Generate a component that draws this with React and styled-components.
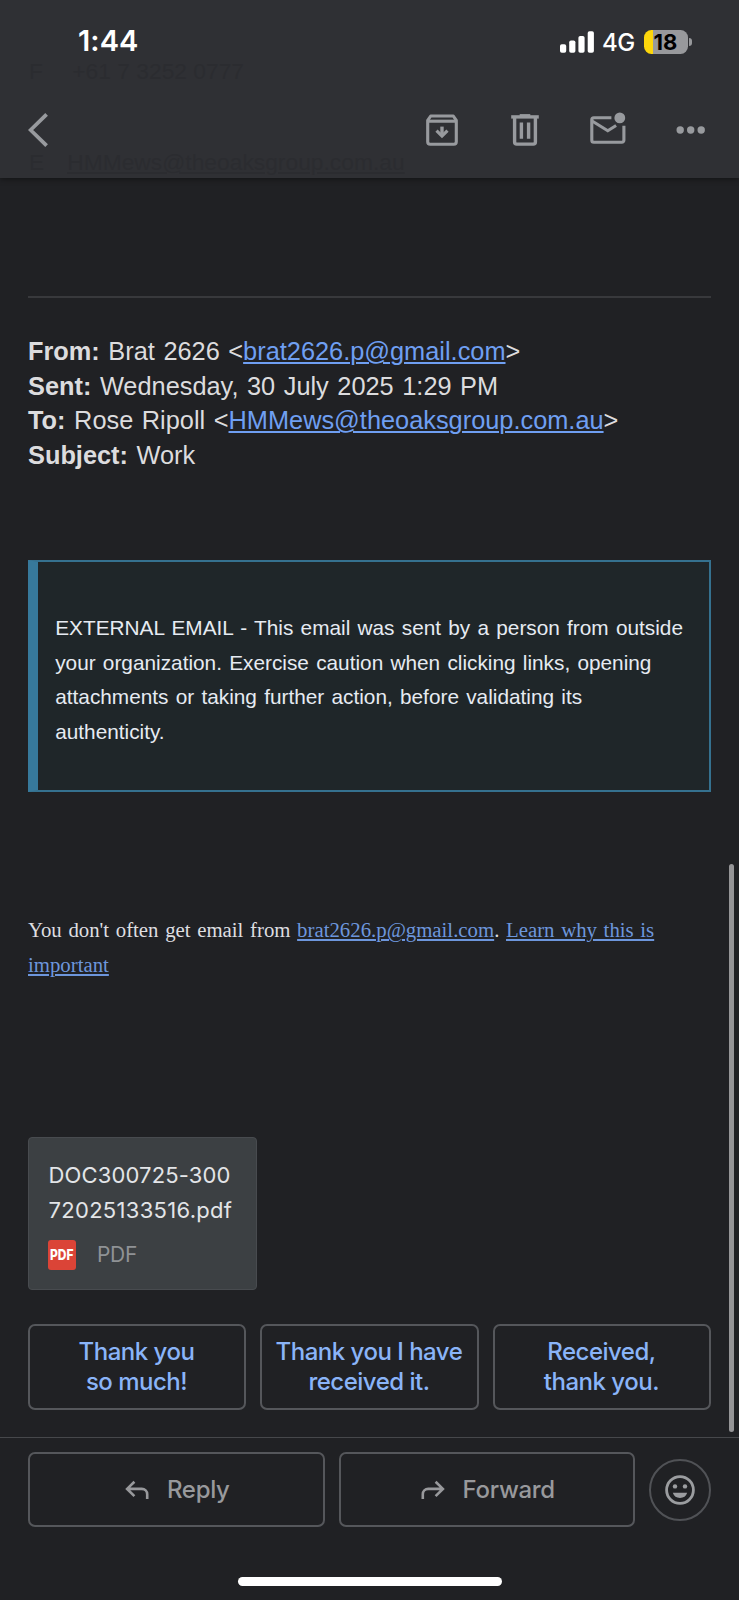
import React from "react";
import styled, { createGlobalStyle } from "styled-components";

const sans = `"Liberation Sans", Arial, sans-serif`;
const ui = `Inter, "Liberation Sans", sans-serif`;
const iconGrey = "#989a9e";

const Global = createGlobalStyle`
  *, *::before, *::after { box-sizing: border-box; }
  html, body { margin: 0; background: #202124; }
  button { margin: 0; padding: 0; background: none; border: 0; font: inherit; }
`;

const Screen = styled.div`
  position: relative;
  width: 739px;
  height: 1600px;
  overflow: hidden;
  display: flex;
  flex-direction: column;
  background: #202124;
  color: #dcdcde;
  font-family: ${sans};
`;

const Header = styled.header`
  position: relative;
  flex: none;
  height: 178px;
  background: #2f3034;
  box-shadow: 0 1px 6px rgba(0, 0, 0, 0.45);
`;

const Underlay = styled.div`
  position: absolute;
  left: 29px;
  top: ${(p) => p.$top}px;
  display: flex;
  gap: 23px;
  font-size: 22.8px;
  line-height: 30px;
  color: #2b2c30;
  white-space: pre;
`;

const UnderlayValue = styled.span`
  text-decoration: ${(p) => (p.$link ? "underline" : "none")};
`;

const StatusBar = styled.div`
  position: relative;
  display: flex;
  align-items: center;
  justify-content: space-between;
  height: 84px;
  padding: 0 47px 0 78px;
  font-family: ${ui};
  color: #fff;
`;

const Clock = styled.span`
  margin-top: -2px;
  font-size: 29px;
  font-weight: 600;
  letter-spacing: 0.1px;
  line-height: 34px;
`;

const StatusRight = styled.div`
  display: flex;
  align-items: center;
`;

const Network = styled.span`
  width: 32px;
  margin: 2px 10px 0 8px;
  font-size: 24px;
  font-weight: 500;
  letter-spacing: -0.6px;
  line-height: 28px;
  white-space: nowrap;
`;

const Battery = styled.div`
  display: flex;
  align-items: center;
  justify-content: center;
  width: 44px;
  height: 24px;
  padding-right: 1px;
  border-radius: 7.5px;
  background: linear-gradient(to right, #fdd60b 9px, #98999c 9px);
  color: #000;
  font-size: 22px;
  font-weight: 700;
  letter-spacing: 0;
  line-height: 24px;
`;

const BatteryNub = styled.i`
  width: 3px;
  height: 8px;
  margin-left: 1px;
  border-radius: 0 3px 3px 0;
  background: #98999c;
`;

const Toolbar = styled.nav`
  position: relative;
  display: flex;
  align-items: center;
  height: 91px;
  padding: 0 30px 0 27.5px;
`;

const IconButton = styled.button`
  display: block;
  width: 36px;
  height: 36px;
  margin-left: ${(p) => p.$gap || 0}px;
  color: ${iconGrey};
  svg { display: block; }
`;

const Spacer = styled.div`
  flex: 1;
`;

const Message = styled.main`
  flex: none;
  height: 1260px;
  padding: 118px 27px 0 28px;
  display: flex;
  flex-direction: column;
  align-items: flex-start;
  border-bottom: 1px solid #46484b;
`;

const Rule = styled.hr`
  flex: none;
  width: 683px;
  height: 2px;
  margin: 0 0 36.1px;
  border: 0;
  background: #38393c;
`;

const MailHeaders = styled.div`
  font-size: 25.35px;
  line-height: 34.6px;
  word-spacing: 1.5px;
  white-space: nowrap;
`;

const Link = styled.a`
  color: ${(p) => p.$tone || "#6f9ff2"};
  text-decoration: underline;
  text-decoration-thickness: 1.5px;
  text-underline-offset: 2px;
`;

const Notice = styled.section`
  flex: none;
  width: 683.4px;
  height: 232px;
  margin-top: 87.5px;
  padding: 49px 0 0 17.2px;
  border: 2px solid #35718f;
  border-left: 10px solid #37799b;
  background: #1f2629;
  color: #e6ebf2;
  font-size: 20.8px;
  line-height: 34.6px;
  word-spacing: 1.45px;
  white-space: nowrap;
`;

const Tip = styled.p`
  margin: 121.2px 0 0;
  font-family: "Liberation Serif", "Times New Roman", serif;
  font-size: 20.8px;
  line-height: 34.6px;
  word-spacing: 1.45px;
  white-space: nowrap;
  color: #dedee0;
`;

const Attachment = styled.section`
  flex: none;
  width: 229px;
  height: 153px;
  margin: 154.6px 0 0 -0.5px;
  padding: 20.4px 0 0 20px;
  border: 1px solid #484b4f;
  border-radius: 4px;
  background: #3c4043;
  font-family: ${ui};
  color: #e3e5e8;
`;

const FileName = styled.div`
  font-size: 22px;
  line-height: 35px;
  letter-spacing: ${(p) => p.$track}px;
  white-space: nowrap;
`;

const FileMeta = styled.div`
  display: flex;
  align-items: center;
  gap: 21px;
  height: 30px;
  margin: 11.4px 0 0 -0.6px;
  font-size: 21px;
  letter-spacing: -0.2px;
  color: #8f9295;
`;

const PdfBadge = styled.span`
  display: flex;
  align-items: center;
  justify-content: center;
  width: 28px;
  height: 30px;
  border-radius: 3px;
  background: #db4437;
  color: #fff;
  font: 800 15px/30px Inter, sans-serif;
  letter-spacing: 0;
`;

const PdfBadgeLabel = styled.span`
  flex: none;
  transform: scaleX(0.8);
`;

const SmartReplies = styled.div`
  display: grid;
  grid-template-columns: repeat(3, 1fr);
  gap: 14px;
  width: 683.4px;
  margin-top: 34px;
`;

const SmartReply = styled.button`
  height: 86px;
  padding: 1px 1.5px 0 0;
  border: 2px solid #55575b;
  border-radius: 7px;
  color: #8ab4f8;
  font-family: ${ui};
  font-size: 24px;
  font-weight: 500;
  line-height: 30.7px;
  letter-spacing: -0.5px;
  white-space: nowrap;
`;

const ReplyBar = styled.footer`
  display: flex;
  align-items: center;
  gap: 14px;
  flex: none;
  height: 75px;
  margin: 14px 28px 0 28px;
`;

const ActionButton = styled.button`
  flex: 1;
  display: flex;
  align-items: center;
  justify-content: center;
  gap: ${(p) => p.$gap}px;
  height: 75px;
  padding-left: 2px;
  border: 2px solid #55575b;
  border-radius: 7px;
  color: #98999c;
  font-family: ${ui};
  font-size: 24px;
  font-weight: 500;
  letter-spacing: -0.3px;
  svg { display: block; }
`;

const EmojiButton = styled.button`
  display: flex;
  align-items: center;
  justify-content: center;
  width: 62px;
  height: 62px;
  border: 2px solid #505256;
  border-radius: 50%;
  color: #9b9da0;
`;

const HomeIndicator = styled.div`
  flex: none;
  width: 264px;
  height: 9px;
  margin: 50px auto 0 238px;
  border-radius: 5px;
  background: #fff;
`;

const ScrollThumb = styled.div`
  position: absolute;
  top: 864px;
  left: 728.5px;
  width: 5.5px;
  height: 568px;
  border-radius: 3px;
  background: #959597;
`;

const SignalIcon = () => (
  <svg width="34" height="22" viewBox="0 0 34 22" fill="#fff">
    <rect x="0" y="13.3" width="6.2" height="8.4" rx="1.8" />
    <rect x="9.2" y="9.4" width="6.2" height="12.3" rx="1.8" />
    <rect x="18.4" y="5" width="6.2" height="16.7" rx="1.8" />
    <rect x="27.7" y="0.3" width="6.2" height="21.4" rx="1.8" />
  </svg>
);

const BackIcon = () => (
  <svg width="36" height="36" viewBox="0 0 36 36" fill="none" stroke="currentColor" strokeWidth="3.8">
    <path d="M18.6 2.4 2.6 18l16 15.6" />
  </svg>
);

const ArchiveIcon = () => (
  <svg width="36" height="36" viewBox="0 0 36 36" fill="none" stroke="currentColor" strokeWidth="3.1">
    <path d="M3.7 8.4 6.7 4h22.6l3 4.4v21.3a2.5 2.5 0 0 1-2.5 2.5H6.2a2.5 2.5 0 0 1-2.5-2.5z" strokeLinejoin="round" />
    <path d="M3.7 9.2h28.6" />
    <path d="M18 14.6v8" strokeWidth="3.4" />
    <path d="m11.4 19.7 2.2-2.2 4.4 4.3 4.4-4.3 2.2 2.2-6.6 6.6z" fill="currentColor" stroke="none" />
  </svg>
);

const TrashIcon = () => (
  <svg width="36" height="36" viewBox="0 0 36 36" fill="none" stroke="currentColor" strokeWidth="3.4">
    <path d="M4.2 4.9h27.6" />
    <path d="M12.7 3.3h10.6" strokeWidth="2.4" />
    <path d="M7.6 5v25a2.1 2.1 0 0 0 2.1 2.1h16.6a2.1 2.1 0 0 0 2.1-2.1V5M14.4 10.6v16.2M21.6 10.6v16.2" />
  </svg>
);

const MailIcon = () => (
  <svg width="36" height="36" viewBox="0 0 36 36" fill="none" stroke="currentColor" strokeWidth="3.1">
    <path d="M21.4 5.8H3.8a2 2 0 0 0-2 2v20.5a2 2 0 0 0 2 2h28.1a2 2 0 0 0 2-2V13.7" />
    <path d="M2.5 9.2 17.8 18.7l8.3-5.2" />
    <circle cx="29.8" cy="5.9" r="5.4" fill="currentColor" stroke="none" />
  </svg>
);

const MoreIcon = () => (
  <svg width="36" height="36" viewBox="0 0 36 36" fill="currentColor">
    <circle cx="7.2" cy="18" r="3.7" />
    <circle cx="17.7" cy="18" r="3.7" />
    <circle cx="28.2" cy="18" r="3.7" />
  </svg>
);

const ArrowIcon = ({ forward }) => (
  <svg width="24" height="20" viewBox="0 0 24 20" fill="none" stroke="currentColor" strokeWidth="2.6">
    <g transform={forward ? "translate(24 0) scale(-1 1)" : undefined}>
      <path d="M9.4 1.7 2.1 8.9l7.3 7.2M2.1 8.9h14.7a5.4 5.4 0 0 1 5.4 5.4V19" />
    </g>
  </svg>
);

const SmileIcon = () => (
  <svg width="30" height="30" viewBox="0 0 30 30" fill="currentColor">
    <circle cx="15" cy="15" r="13.4" fill="none" stroke="currentColor" strokeWidth="2.8" />
    <circle cx="10" cy="11.4" r="2.2" />
    <circle cx="20" cy="11.4" r="2.2" />
    <path d="M7.8 17.8h14.4a7.6 7.6 0 0 1-14.4 0z" />
  </svg>
);

const smartReplies = [
  ["Thank you", "so much!"],
  ["Thank you I have", "received it."],
  ["Received,", "thank you."],
];

export default function App() {
  return (
    <Screen>
      <Global />
      <Header>
        <Underlay $top={56}>
          <span>F </span>
          <UnderlayValue>+61 7 3252 0777</UnderlayValue>
        </Underlay>
        <Underlay $top={147}>
          <span>E</span>
          <UnderlayValue $link>HMMews@theoaksgroup.com.au</UnderlayValue>
        </Underlay>
        <StatusBar>
          <Clock>1:44</Clock>
          <StatusRight>
            <SignalIcon />
            <Network>4G</Network>
            <Battery>18</Battery>
            <BatteryNub />
          </StatusRight>
        </StatusBar>
        <Toolbar>
          <IconButton aria-label="Back"><BackIcon /></IconButton>
          <Spacer />
          <IconButton aria-label="Archive"><ArchiveIcon /></IconButton>
          <IconButton aria-label="Delete" $gap={47}><TrashIcon /></IconButton>
          <IconButton aria-label="Mark unread" $gap={47}><MailIcon /></IconButton>
          <IconButton aria-label="More" $gap={47}><MoreIcon /></IconButton>
        </Toolbar>
      </Header>

      <Message>
        <Rule />
        <MailHeaders>
          <div><b>From:</b> Brat 2626 &lt;<Link>brat2626.p@gmail.com</Link>&gt;</div>
          <div><b>Sent:</b> Wednesday, 30 July 2025 1:29 PM</div>
          <div><b>To:</b> Rose Ripoll &lt;<Link>HMMews@theoaksgroup.com.au</Link>&gt;</div>
          <div><b>Subject:</b> Work</div>
        </MailHeaders>
        <Notice>
          EXTERNAL EMAIL - This email was sent by a person from outside<br />
          your organization. Exercise caution when clicking links, opening<br />
          attachments or taking further action, before validating its<br />
          authenticity.
        </Notice>
        <Tip>
          You don't often get email from <Link $tone="#6d96dc">brat2626.p@gmail.com</Link>.{" "}
          <Link $tone="#6d96dc">Learn why this is<br />important</Link>
        </Tip>
        <Attachment>
          <FileName $track={0.15}>DOC300725-300</FileName>
          <FileName $track={0.3}>72025133516.pdf</FileName>
          <FileMeta>
            <PdfBadge><PdfBadgeLabel>PDF</PdfBadgeLabel></PdfBadge>
            <span>PDF</span>
          </FileMeta>
        </Attachment>
        <SmartReplies>
          {smartReplies.map(([first, second]) => (
            <SmartReply key={first}>{first}<br />{second}</SmartReply>
          ))}
        </SmartReplies>
      </Message>

      <ReplyBar>
        <ActionButton $gap={18}><ArrowIcon />Reply</ActionButton>
        <ActionButton $gap={18}><ArrowIcon forward />Forward</ActionButton>
        <EmojiButton aria-label="React"><SmileIcon /></EmojiButton>
      </ReplyBar>
      <HomeIndicator />
      <ScrollThumb />
    </Screen>
  );
}
